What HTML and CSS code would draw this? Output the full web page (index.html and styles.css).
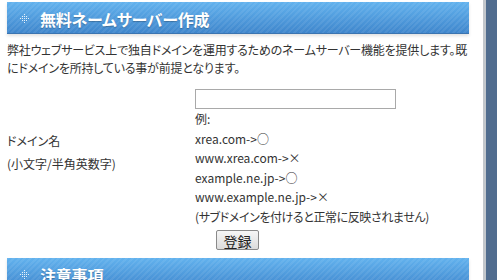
FILE: index.html
```html
<!DOCTYPE html>
<html lang="ja">
<head>
    <meta charset="UTF-8">
    <meta name="viewport" content="width=device-width, initial-scale=1.0">
    <title>無料ネームサーバー作成</title>
    <link rel="stylesheet" href="styles.css">
</head>
<body>
    <div class="main">
        <h2 class="section-title">
            <svg class="title-icon" width="9" height="9" viewBox="0 0 9 9">
                <g fill="#fff">
                    <rect x="4" y="0" width="1" height="1"/>
                    <rect x="2" y="2" width="1" height="1"/><rect x="4" y="2" width="1" height="1"/><rect x="6" y="2" width="1" height="1"/>
                    <rect x="0" y="4" width="1" height="1"/><rect x="2" y="4" width="1" height="1"/><rect x="4" y="4" width="1" height="1"/><rect x="6" y="4" width="1" height="1"/><rect x="8" y="4" width="1" height="1"/>
                    <rect x="2" y="6" width="1" height="1"/><rect x="4" y="6" width="1" height="1"/><rect x="6" y="6" width="1" height="1"/>
                    <rect x="4" y="8" width="1" height="1"/>
                </g>
            </svg>
            無料ネームサーバー作成
        </h2>

        <p class="intro">弊社ウェブサービス上で独自ドメインを運用するためのネームサーバー機能を提供します。既にドメインを所持している事が前提となります。</p>

        <form class="ns-form">
            <div class="form-label">ドメイン名<br>(小文字/半角英数字)</div>
            <div class="form-field">
                <input type="text" class="text-input">
                <div class="examples">
                    例:<br>
                    xrea.com-&gt;○<br>
                    www.xrea.com-&gt;×<br>
                    example.ne.jp-&gt;○<br>
                    www.example.ne.jp-&gt;×<br>
                    <span class="note">(サブドメインを付けると正常に反映されません)</span>
                </div>
                <button type="button" class="submit-btn">登録</button>
            </div>
        </form>

        <h2 class="section-title">
            <svg class="title-icon" width="9" height="9" viewBox="0 0 9 9">
                <g fill="#fff">
                    <rect x="4" y="0" width="1" height="1"/>
                    <rect x="2" y="2" width="1" height="1"/><rect x="4" y="2" width="1" height="1"/><rect x="6" y="2" width="1" height="1"/>
                    <rect x="0" y="4" width="1" height="1"/><rect x="2" y="4" width="1" height="1"/><rect x="4" y="4" width="1" height="1"/><rect x="6" y="4" width="1" height="1"/><rect x="8" y="4" width="1" height="1"/>
                    <rect x="2" y="6" width="1" height="1"/><rect x="4" y="6" width="1" height="1"/><rect x="6" y="6" width="1" height="1"/>
                    <rect x="4" y="8" width="1" height="1"/>
                </g>
            </svg>
            注意事項
        </h2>
    </div>
    <div class="side"></div>
</body>
</html>
```

FILE: styles.css
```css
body {
    margin: 0;
    display: flex;
    background-color: #fff;
    color: #333;
    font-family: "Noto Sans CJK JP", sans-serif;
    font-feature-settings: "palt";
    font-size: 12px;
    overflow: hidden;
    height: 280px;
}

.main {
    width: 462px;
    padding: 2px 14px 0 7px;
}

.side {
    flex: 1;
    border-left: 3px solid #c3c7cc;
    background-color: #516d8f;
}

.section-title {
    display: flex;
    align-items: center;
    height: 32px;
    margin: 0;
    padding: 2px 0 0 13px;
    box-sizing: border-box;
    color: #fff;
    font-size: 16px;
    font-weight: bold;
    letter-spacing: -0.2px;
    text-shadow: 0 1px 1px rgba(0, 0, 0, 0.25);
    background-color: #4d98dc;
    background-image:
        repeating-linear-gradient(135deg, rgba(255, 255, 255, 0.07) 0 2px, rgba(0, 0, 0, 0) 2px 4px),
        linear-gradient(#62b2ee, #3f86cc);
    border-bottom: 1px solid #3b74b0;
    box-shadow: 0 2px 3px rgba(0, 0, 0, 0.12);
}

.title-icon {
    margin-right: 11px;
    opacity: 0.85;
}

.intro {
    margin: 7px 0 0;
    line-height: 18px;
    letter-spacing: -0.2px;
}

.ns-form {
    display: grid;
    grid-template-columns: 188px 1fr;
    margin-top: 12px;
}

.form-label {
    padding-top: 40px;
    line-height: 23px;
}

.text-input {
    display: block;
    width: 201px;
    height: 20px;
    box-sizing: border-box;
    margin: 0;
    border: 1px solid #a9a9a9;
    padding: 1px 3px;
}

.examples {
    line-height: 19.5px;
}

.note {
    letter-spacing: -0.4px;
}

.submit-btn {
    display: block;
    margin: 4px 0 0 21px;
    width: 43px;
    height: 20px;
    padding: 0;
    font-family: "Noto Sans CJK JP", sans-serif;
    font-size: 14px;
    color: #222;
    border: 1px solid #8a8a8a;
    border-radius: 2px;
    background: linear-gradient(#f6f6f6, #dcdcdc);
}

.ns-form + .section-title {
    margin-top: 8px;
}
```
